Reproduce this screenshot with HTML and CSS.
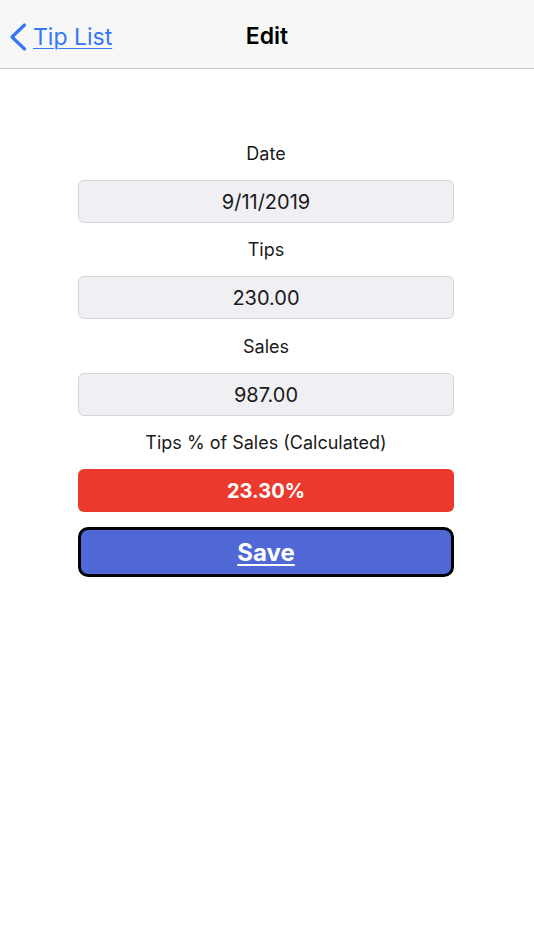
FILE: index.html
```html
<!DOCTYPE html>
<html>
<head>
<meta charset="utf-8">
<link rel="stylesheet" href="styles.css">
</head>
<body>
<header class="nav">
  <a class="back" href="#">
    <svg class="chev" width="20" height="30" viewBox="0 0 20 30"><path d="M16.5 3 L4 15 L16.5 27" fill="none" stroke="#3478f6" stroke-width="3.2" stroke-linecap="round" stroke-linejoin="round"/></svg>
    <span class="back-text">Tip List</span>
  </a>
  <div class="title">Edit</div>
</header>
<main class="form">
  <div class="label">Date</div>
  <div class="field">9/11/2019</div>
  <div class="label">Tips</div>
  <div class="field">230.00</div>
  <div class="label label-wide">Sales</div>
  <div class="field">987.00</div>
  <div class="label">Tips % of Sales (Calculated)</div>
  <div class="result">23.30%</div>
  <a class="save" href="#">Save</a>
</main>
</body>
</html>
```
FILE: styles.css
```css
html, body { margin: 0; padding: 0; background: #fff; }
body { font-family: Inter, "Noto Sans", sans-serif; color: #1a1a1a; width: 534px; }
.nav {
  height: 64px;
  padding-top: 4px;
  background: #f7f7f7;
  border-bottom: 1px solid #c9c9cc;
  display: flex;
  align-items: center;
  justify-content: center;
  position: relative;
}
.back {
  position: absolute;
  left: 8px;
  top: 22px;
  display: flex;
  align-items: center;
  gap: 5px;
  color: #3478f6;
  text-decoration: underline;
  text-underline-offset: 3px;
  text-decoration-thickness: 1px;
  font-size: 23px;
}
.chev { display: block; }
.title { font-size: 23px; font-weight: 600; color: #000; }
.form {
  width: 376px;
  margin: 0 0 0 78px;
  padding-top: 58px;
  display: flex;
  flex-direction: column;
}
.label {
  text-align: center;
  font-size: 18px;
  line-height: 24px;
  padding: 15px 0 14px;
}
.label-wide { padding-top: 16px; }
.field {
  height: 41px;
  border: 1px solid #d4d4d9;
  border-radius: 6px;
  background: #efeff4;
  display: flex;
  align-items: center;
  justify-content: center;
  font-size: 20px;
}
.result {
  height: 43px;
  border-radius: 6px;
  background: #eb3a2d;
  color: #fff;
  font-weight: 700;
  font-size: 20px;
  display: flex;
  align-items: center;
  justify-content: center;
}
.save {
  margin-top: 15px;
  height: 44px;
  border: 3px solid #000;
  border-radius: 10px;
  background: #5068d6;
  color: #fff;
  font-weight: 700;
  font-size: 24px;
  display: flex;
  align-items: center;
  justify-content: center;
  text-decoration: underline;
  text-underline-offset: 3px;
  text-decoration-thickness: 2px;
}
```
